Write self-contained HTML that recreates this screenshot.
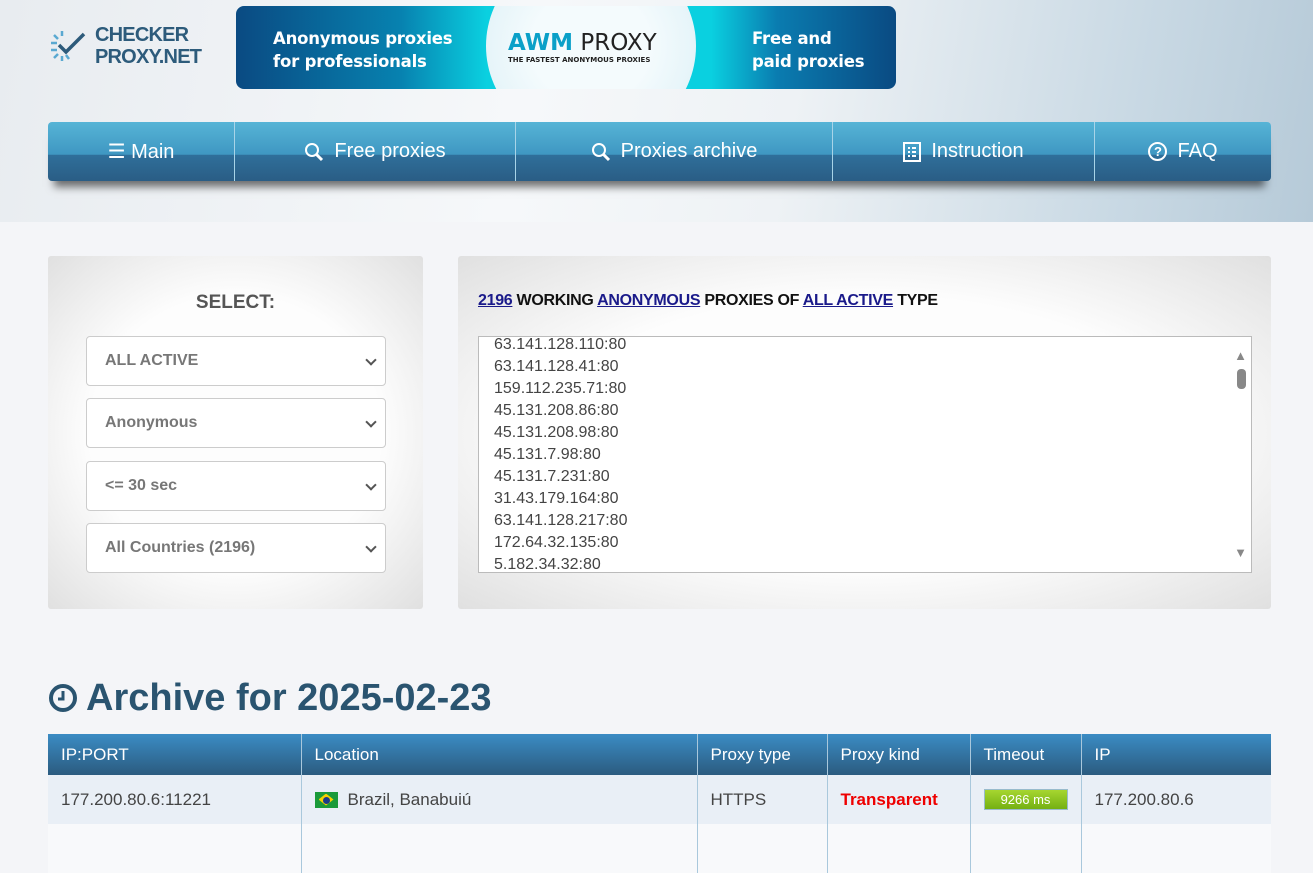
<!DOCTYPE html>
<html><head><meta charset="utf-8"><style>
*{box-sizing:border-box;margin:0;padding:0}
body{width:1313px;height:839px;overflow:hidden;font-family:"Liberation Sans Narrow","Liberation Sans",sans-serif;background:#f4f5f8;position:relative}
.hdr{position:absolute;left:0;top:0;width:1313px;height:222px;background:linear-gradient(100deg,#e8ecf0 0%,#f6f8fa 40%,#eef2f5 60%,#c9d9e4 85%,#b6cad8 100%)}
.logo{position:absolute;left:95px;top:24px;color:#2d5b7b;font-weight:bold;font-size:20px;line-height:22px;letter-spacing:-0.8px}
.ban{position:absolute;left:236px;top:6px;width:660px;height:83px;border-radius:8px;overflow:hidden;background:linear-gradient(90deg,#0a4a82 0%,#0782b0 25%,#0ad0e0 38%,#0ad0e0 72%,#0a7cb0 82%,#0a4a82 100%);color:#fff;font-family:"DejaVu Sans",sans-serif;font-weight:bold}
.ban .c{position:absolute;left:250px;top:-60px;width:210px;height:200px;border-radius:50%;background:radial-gradient(#f4fbfd 40%,#d8eef5 100%)}
.ban .t{position:absolute;font-size:16.5px;line-height:23px;letter-spacing:-0.2px}
.nav{position:absolute;left:48px;top:122px;width:1223px;height:59px;border-radius:4px;background:linear-gradient(#56b4d6 0%,#3f97c2 55%,#2f6f9a 56%,#2a5d85 100%);box-shadow:0 12px 8px -6px rgba(0,0,0,.55);display:flex;color:#fff;font-size:20px}
.nav div{display:flex;align-items:center;justify-content:center;border-right:1px solid #a8d4e8;gap:10px}
.nav div:last-child{border:none}
.panel{position:absolute;top:256px;height:353px;background:radial-gradient(ellipse at center,#fdfdfd 55%,#e0e0e0 100%);border-radius:3px}
.sel{position:absolute;left:38px;width:300px;height:50px;background:#fff;border:1px solid #ccc;border-radius:4px;color:#777;font-weight:bold;font-size:16px;line-height:48px;padding-left:18px}
.sel:after{content:"";position:absolute;right:10px;top:19px;width:6px;height:6px;border-right:2px solid #555;border-bottom:2px solid #555;transform:rotate(45deg)}
.list{position:absolute;left:20px;top:80px;width:774px;height:237px;background:#fff;border:1px solid #bbb;overflow:hidden;font-size:16px;color:#444;line-height:22px}
.list p{padding-left:15px}
h1{position:absolute;left:48px;top:677px;font-size:38px;color:#2a5470;font-weight:bold}
table{position:absolute;left:48px;top:734px;width:1223px;border-collapse:collapse;font-size:17px}
th{height:41px;background:linear-gradient(#3b8cc4,#2b5b7f);color:#fff;font-weight:normal;text-align:left;padding-left:13px;border-right:1px solid #a9c8dc}
td{height:49px;background:#e9eff6;color:#444;padding-left:13px;border-right:1px solid #a9c8dc}
</style></head><body>
<div class="hdr"></div>
<svg style="position:absolute;left:48px;top:28px" width="40" height="36" viewBox="0 0 40 36"><g stroke="#5aa9d1" stroke-width="2.5" fill="none"><path d="M3 15h6M3 22h6M6 7l4 4M6 30l4-4M14 3v5M14 28v5M21 31l-3-4"/></g><path d="M11 17l7 7L36 6" stroke="#2d5b7b" stroke-width="3.5" fill="none"/></svg>
<div class="logo">CHECKER<br>PROXY.NET</div>
<div class="ban"><div class="c"></div><div class="t" style="left:37px;top:21px">Anonymous proxies<br>for professionals</div>
<div style="position:absolute;left:272px;top:24px;color:#0aa0c8;font-size:23px;font-weight:900">AWM<span style="color:#222;font-weight:normal"> PROXY</span></div>
<div style="position:absolute;left:272px;top:50px;color:#222;font-size:7px">THE FASTEST ANONYMOUS PROXIES</div>
<div class="t" style="left:516px;top:21px">Free and<br>paid proxies</div></div>
<div class="nav">
<div style="width:187px">☰ Main</div>
<div style="width:281px"><svg width="20" height="20" viewBox="0 0 20 20"><circle cx="8" cy="8" r="6" stroke="#fff" stroke-width="2" fill="none"/><path d="M12 12l6 6" stroke="#fff" stroke-width="3"/></svg> Free proxies</div>
<div style="width:317px"><svg width="20" height="20" viewBox="0 0 20 20"><circle cx="8" cy="8" r="6" stroke="#fff" stroke-width="2" fill="none"/><path d="M12 12l6 6" stroke="#fff" stroke-width="3"/></svg> Proxies archive</div>
<div style="width:262px"><svg width="18" height="20" viewBox="0 0 18 20"><rect x="1" y="1" width="16" height="18" stroke="#fff" stroke-width="2" fill="none"/><path d="M5 6h2M5 10h2M5 14h2M9 6h4M9 10h4M9 14h4" stroke="#fff" stroke-width="2"/></svg> Instruction</div>
<div style="width:176px"><span style="border:2px solid #fff;border-radius:50%;width:19px;height:19px;font-size:13px;font-weight:bold;display:inline-flex;align-items:center;justify-content:center">?</span> FAQ</div>
</div>
<div class="panel" style="left:48px;width:375px">
<div style="position:absolute;top:36px;width:100%;text-align:center;font-weight:bold;color:#555;font-size:19px">SELECT:</div>
<div class="sel" style="top:80px">ALL ACTIVE</div>
<div class="sel" style="top:142px">Anonymous</div>
<div class="sel" style="top:205px">&lt;= 30 sec</div>
<div class="sel" style="top:267px">All Countries (2196)</div>
</div>
<div class="panel" style="left:458px;width:813px">
<div style="position:absolute;left:20px;top:36px;font-size:16px;font-weight:bold;color:#111;letter-spacing:-0.3px"><u style="color:#1a1a8a">2196</u> WORKING <u style="color:#1a1a8a">ANONYMOUS</u> PROXIES OF <u style="color:#1a1a8a">ALL ACTIVE</u> TYPE</div>
<div class="list"><div style="margin-top:-3px">
<p>63.141.128.110:80</p><p>63.141.128.41:80</p><p>159.112.235.71:80</p><p>45.131.208.86:80</p><p>45.131.208.98:80</p><p>45.131.7.98:80</p><p>45.131.7.231:80</p><p>31.43.179.164:80</p><p>63.141.128.217:80</p><p>172.64.32.135:80</p><p>5.182.34.32:80</p></div>
<div style="position:absolute;right:4px;top:8px;color:#888;font-size:13px">▲</div>
<div style="position:absolute;right:5px;top:32px;width:9px;height:20px;background:#888;border-radius:4px"></div>
<div style="position:absolute;right:4px;bottom:8px;color:#888;font-size:13px">▼</div></div>
</div>
<svg style="position:absolute;left:48px;top:683px" width="30" height="30" viewBox="0 0 30 30"><circle cx="15" cy="15" r="12" stroke="#2a5470" stroke-width="4" fill="none"/><path d="M15 8v8h-5" stroke="#2a5470" stroke-width="3" fill="none"/></svg>
<h1 style="left:86px">Archive for 2025-02-23</h1>
<table><tr><th style="width:253px">IP:PORT</th><th style="width:396px">Location</th><th style="width:130px">Proxy type</th><th style="width:143px">Proxy kind</th><th style="width:111px">Timeout</th><th style="border:none">IP</th></tr>
<tr><td>177.200.80.6:11221</td><td><span style="display:inline-block;width:23px;height:16px;background:#1a9a3a;vertical-align:-3px;margin-right:10px;position:relative"><span style="position:absolute;left:4px;top:2px;width:15px;height:12px;background:#f5d000;clip-path:polygon(50% 0,100% 50%,50% 100%,0 50%)"></span><span style="position:absolute;left:8px;top:5px;width:7px;height:7px;border-radius:50%;background:#1a3a8a"></span></span>Brazil, Banabuiú</td><td>HTTPS</td><td style="color:#e00;font-weight:bold">Transparent</td><td><span style="display:inline-block;width:84px;height:21px;border:1px solid #9bc;background:linear-gradient(#a6d630,#74b012);color:#fff;text-align:center;font-size:13px;line-height:19px">9266 ms</span></td><td style="border:none">177.200.80.6</td></tr>
<tr><td style="background:#f8f9fb"></td><td style="background:#f8f9fb"></td><td style="background:#f8f9fb"></td><td style="background:#f8f9fb"></td><td style="background:#f8f9fb"></td><td style="background:#f8f9fb;border:none"></td></tr></table>
</body></html>
